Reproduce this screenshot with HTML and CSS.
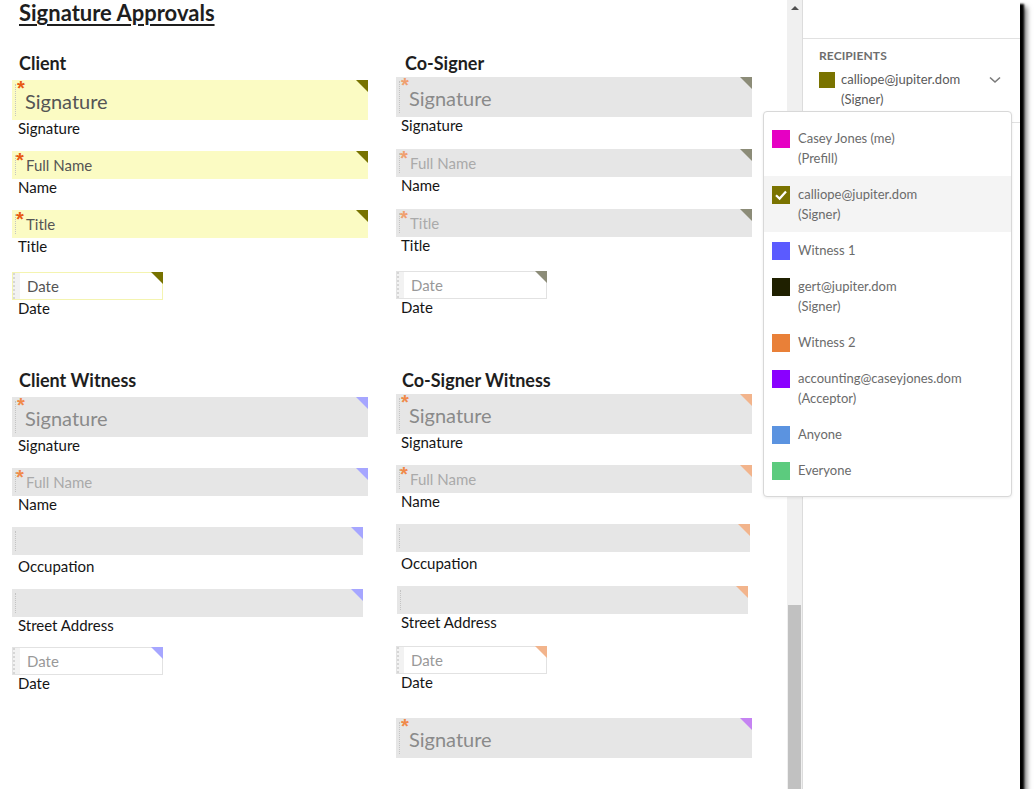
FILE: index.html
```html
<!DOCTYPE html>
<html lang="en">
<head>
    <meta charset="UTF-8">
    <title>Signature Approvals</title>
    <link rel="stylesheet" href="styles.css">
</head>
<body>
    <div class="window">
        <main class="doc">
            <h1 class="doc-title">Signature Approvals</h1>
            <div class="grid">
                <section class="col client">
                    <h2 class="heading">Client</h2>
                    <div class="field sig"><span class="grip"></span><span class="req">*</span><span class="ph">Signature</span><span class="corner"></span></div>
                    <div class="label">Signature</div>
                    <div class="field"><span class="grip"></span><span class="req">*</span><span class="ph">Full Name</span><span class="corner"></span></div>
                    <div class="label">Name</div>
                    <div class="field"><span class="grip"></span><span class="req">*</span><span class="ph">Title</span><span class="corner"></span></div>
                    <div class="label">Title</div>
                    <div class="field date"><span class="grip"></span><span class="ph">Date</span><span class="corner"></span></div>
                    <div class="label">Date</div>
                </section>

                <section class="col cosigner">
                    <h2 class="heading">Co-Signer</h2>
                    <div class="field sig"><span class="grip"></span><span class="req">*</span><span class="ph">Signature</span><span class="corner"></span></div>
                    <div class="label">Signature</div>
                    <div class="field"><span class="grip"></span><span class="req">*</span><span class="ph">Full Name</span><span class="corner"></span></div>
                    <div class="label">Name</div>
                    <div class="field"><span class="grip"></span><span class="req">*</span><span class="ph">Title</span><span class="corner"></span></div>
                    <div class="label">Title</div>
                    <div class="field date"><span class="grip"></span><span class="ph">Date</span><span class="corner"></span></div>
                    <div class="label">Date</div>
                </section>

                <section class="col client-witness">
                    <h2 class="heading">Client Witness</h2>
                    <div class="field sig"><span class="grip"></span><span class="req">*</span><span class="ph">Signature</span><span class="corner"></span></div>
                    <div class="label">Signature</div>
                    <div class="field"><span class="grip"></span><span class="req">*</span><span class="ph">Full Name</span><span class="corner"></span></div>
                    <div class="label">Name</div>
                    <div class="field narrow"><span class="grip"></span><span class="corner"></span></div>
                    <div class="label spaced">Occupation</div>
                    <div class="field narrow"><span class="grip"></span><span class="corner"></span></div>
                    <div class="label">Street Address</div>
                    <div class="field date"><span class="grip"></span><span class="ph">Date</span><span class="corner"></span></div>
                    <div class="label">Date</div>
                </section>

                <section class="col cosigner-witness">
                    <h2 class="heading">Co-Signer Witness</h2>
                    <div class="field sig"><span class="grip"></span><span class="req">*</span><span class="ph">Signature</span><span class="corner"></span></div>
                    <div class="label">Signature</div>
                    <div class="field"><span class="grip"></span><span class="req">*</span><span class="ph">Full Name</span><span class="corner"></span></div>
                    <div class="label">Name</div>
                    <div class="field narrow"><span class="grip"></span><span class="corner"></span></div>
                    <div class="label spaced">Occupation</div>
                    <div class="field narrower"><span class="grip"></span><span class="corner"></span></div>
                    <div class="label">Street Address</div>
                    <div class="field date"><span class="grip"></span><span class="ph">Date</span><span class="corner"></span></div>
                    <div class="label">Date</div>
                    <div class="field sig acceptor"><span class="grip"></span><span class="req">*</span><span class="ph">Signature</span><span class="corner"></span></div>
                </section>
            </div>
        </main>

        <div class="scrollbar">
            <span class="arrow-up"></span>
            <span class="thumb"></span>
        </div>

        <aside class="panel">
            <div class="panel-top"></div>
            <div class="recipients">
                <div class="recipients-title">RECIPIENTS</div>
                <div class="recipient-row">
                    <span class="swatch small" style="background:#7a7300"></span>
                    <span class="recipient-text">calliope@jupiter.dom<br>(Signer)</span>
                    <svg class="chevron" width="12" height="8" viewBox="0 0 12 8"><path d="M1 1.5 L6 6 L11 1.5" fill="none" stroke="#7a7a7a" stroke-width="1.6"/></svg>
                </div>
            </div>
        </aside>

        <div class="dropdown">
            <div class="item"><span class="swatch" style="background:#e600c3"></span><span>Casey Jones (me)<br>(Prefill)</span></div>
            <div class="item selected"><span class="swatch" style="background:#7a7300"><svg width="18" height="18" viewBox="0 0 18 18"><path d="M4 9.2 L7.6 12.6 L14 5.4" fill="none" stroke="#fff" stroke-width="2.2"/></svg></span><span>calliope@jupiter.dom<br>(Signer)</span></div>
            <div class="item"><span class="swatch" style="background:#5b5bff"></span><span>Witness 1</span></div>
            <div class="item"><span class="swatch" style="background:#1f2000"></span><span>gert@jupiter.dom<br>(Signer)</span></div>
            <div class="item"><span class="swatch" style="background:#e98038"></span><span>Witness 2</span></div>
            <div class="item"><span class="swatch" style="background:#8a00ff"></span><span>accounting@caseyjones.dom<br>(Acceptor)</span></div>
            <div class="item"><span class="swatch" style="background:#5b93e0"></span><span>Anyone</span></div>
            <div class="item"><span class="swatch" style="background:#5ccb7e"></span><span>Everyone</span></div>
        </div>
    </div>
</body>
</html>
```

FILE: styles.css
```css
body {
    margin: 0;
    background: #fff;
    font-family: 'Lato', 'Noto Sans', sans-serif;
}
.window {
    position: relative;
    width: 1020px;
    height: 789px;
    display: flex;
    background: #fff;
    box-shadow: 4px 4px 2px #000, 7px 7px 5px rgba(0, 0, 0, 0.5);
}
.doc {
    width: 775px;
    padding-left: 12px;
    overflow: hidden;
    color: #1e1e1e;
}
.doc-title {
    margin: 0 0 0 7px;
    font-size: 22px;
    line-height: 25px;
    font-weight: bold;
    text-decoration: underline;
    text-decoration-thickness: 2px;
    text-underline-offset: 3px;
    color: #1e1e1e;
}
.grid {
    display: grid;
    grid-template-columns: 356px 356px;
    column-gap: 28px;
    row-gap: 52px;
    margin-top: 27px;
    align-items: start;
}
.col {
    display: flex;
    flex-direction: column;
    align-items: flex-start;
}
.heading {
    margin: 0 0 6px 7px;
    font-size: 18px;
    line-height: 22px;
    font-weight: bold;
}
.cosigner .heading,
.cosigner-witness .heading {
    margin-bottom: 3px;
}
.cosigner .heading {
    margin-left: 9px;
}
.cosigner-witness .heading {
    margin-left: 6px;
}
.label {
    font-size: 15px;
    line-height: 17px;
    padding-left: 6px;
    color: #151515;
}
.cosigner .label,
.cosigner-witness .label {
    padding-left: 5px;
}
.label.spaced {
    margin-top: 3px;
}

/* form fields */
.field {
    position: relative;
    display: flex;
    align-items: center;
    width: 356px;
    height: 28px;
    margin-top: 14px;
    background: #e6e6e6;
    box-sizing: border-box;
}
.cosigner .field {
    margin-top: 15px;
}
.heading + .field {
    margin-top: 0;
}
.field.sig {
    height: 40px;
}
.field.narrow {
    width: 351px;
}
.cosigner-witness .field.narrow {
    width: 354px;
}
.field.narrower {
    width: 351px;
    margin-left: 1px;
}
.field.date {
    width: 151px;
    margin-top: 17px;
    background: #fff;
    border: 1px solid #e2e2e2;
}
.client-witness .field.date {
    margin-top: 13px;
}
.cosigner-witness .field.date {
    margin-top: 15px;
}
.grip {
    align-self: stretch;
    width: 0;
    margin: 4px 0 4px 3px;
    border-left: 1px dotted #c4c4c4;
}
.date .grip {
    margin: 0;
    width: 5px;
    background: #f2f2f2;
    border-left: 2px dotted #d6d6d6;
}
.ph {
    margin-left: 10px;
    font-size: 15px;
    color: #aaa;
}
.sig .ph {
    margin-left: 9px;
    margin-top: 2px;
    font-size: 20px;
    color: #8a8a8a;
}
.date .ph {
    margin-left: 7px;
    color: #999;
}
.req {
    position: absolute;
    left: 4px;
    top: -1px;
    font-family: 'Liberation Sans', sans-serif;
    font-size: 20px;
    font-weight: bold;
    line-height: 20px;
    color: #f0a070;
}
.sig .req {
    left: 5px;
    top: -2px;
}
.corner {
    position: absolute;
    top: 0;
    right: 0;
    width: 0;
    height: 0;
    border-top: 12px solid #8c8c78;
    border-left: 12px solid transparent;
}
.date .corner {
    top: -1px;
    right: -1px;
}

/* recipient colours on the page */
.client .field {
    background: #fbfbc3;
}
.client .field.date {
    background: #fff;
    border-color: #f4f4b0;
}
.client .ph {
    color: #555;
}
.client .req {
    color: #e85a12;
}
.client .corner {
    border-top-color: #777200;
}
.client-witness .corner {
    border-top-color: #a6a6ff;
}
.client-witness .req,
.cosigner-witness .req {
    color: #f08a4a;
}
.cosigner-witness .corner {
    border-top-color: #f2b48c;
}
.cosigner-witness .field.acceptor {
    margin-top: 27px;
}
.cosigner-witness .acceptor .corner {
    border-top-color: #c583f2;
}

/* scrollbar */
.scrollbar {
    width: 15px;
    display: flex;
    flex-direction: column;
    justify-content: space-between;
    align-items: center;
    background: #f0f0f0;
    border-right: 1px solid #dcdcdc;
}
.arrow-up {
    margin-top: 6px;
    width: 0;
    height: 0;
    border-left: 4px solid transparent;
    border-right: 4px solid transparent;
    border-bottom: 4px solid #505050;
}
.thumb {
    width: 13px;
    height: 184px;
    background: #c1c1c1;
}

/* right panel */
.panel {
    flex: 1;
    display: flex;
    flex-direction: column;
}
.panel-top {
    height: 38px;
    border-bottom: 1px solid #e1e1e1;
}
.recipients {
    padding: 9px 16px 13px 16px;
    border-bottom: 1px solid #e1e1e1;
}
.recipients-title {
    font-size: 12px;
    line-height: 16px;
    font-weight: bold;
    color: #6e6e6e;
    letter-spacing: 0.1px;
}
.recipient-row {
    display: flex;
    align-items: flex-start;
    gap: 6px;
    margin-top: 5px;
}
.recipient-text {
    flex: 1;
    font-size: 13px;
    line-height: 20px;
    color: #5a5a5a;
}
.chevron {
    margin: 7px 3px 0 0;
}
.swatch {
    flex: none;
    width: 18px;
    height: 18px;
    margin-top: 2px;
}
.swatch.small {
    width: 16px;
    height: 16px;
    margin-top: 3px;
}
.swatch svg {
    display: block;
}

/* recipient menu */
.dropdown {
    position: absolute;
    left: 763px;
    top: 111px;
    width: 249px;
    padding: 8px 0;
    background: #fff;
    border: 1px solid #d8d8d8;
    border-radius: 4px;
    box-shadow: 0 1px 3px rgba(0, 0, 0, 0.08);
    box-sizing: border-box;
}
.item {
    display: flex;
    align-items: flex-start;
    gap: 8px;
    padding: 8px 8px;
    font-size: 13px;
    line-height: 20px;
    color: #6b6b6b;
}
.item.selected {
    background: #f4f4f4;
}
```
